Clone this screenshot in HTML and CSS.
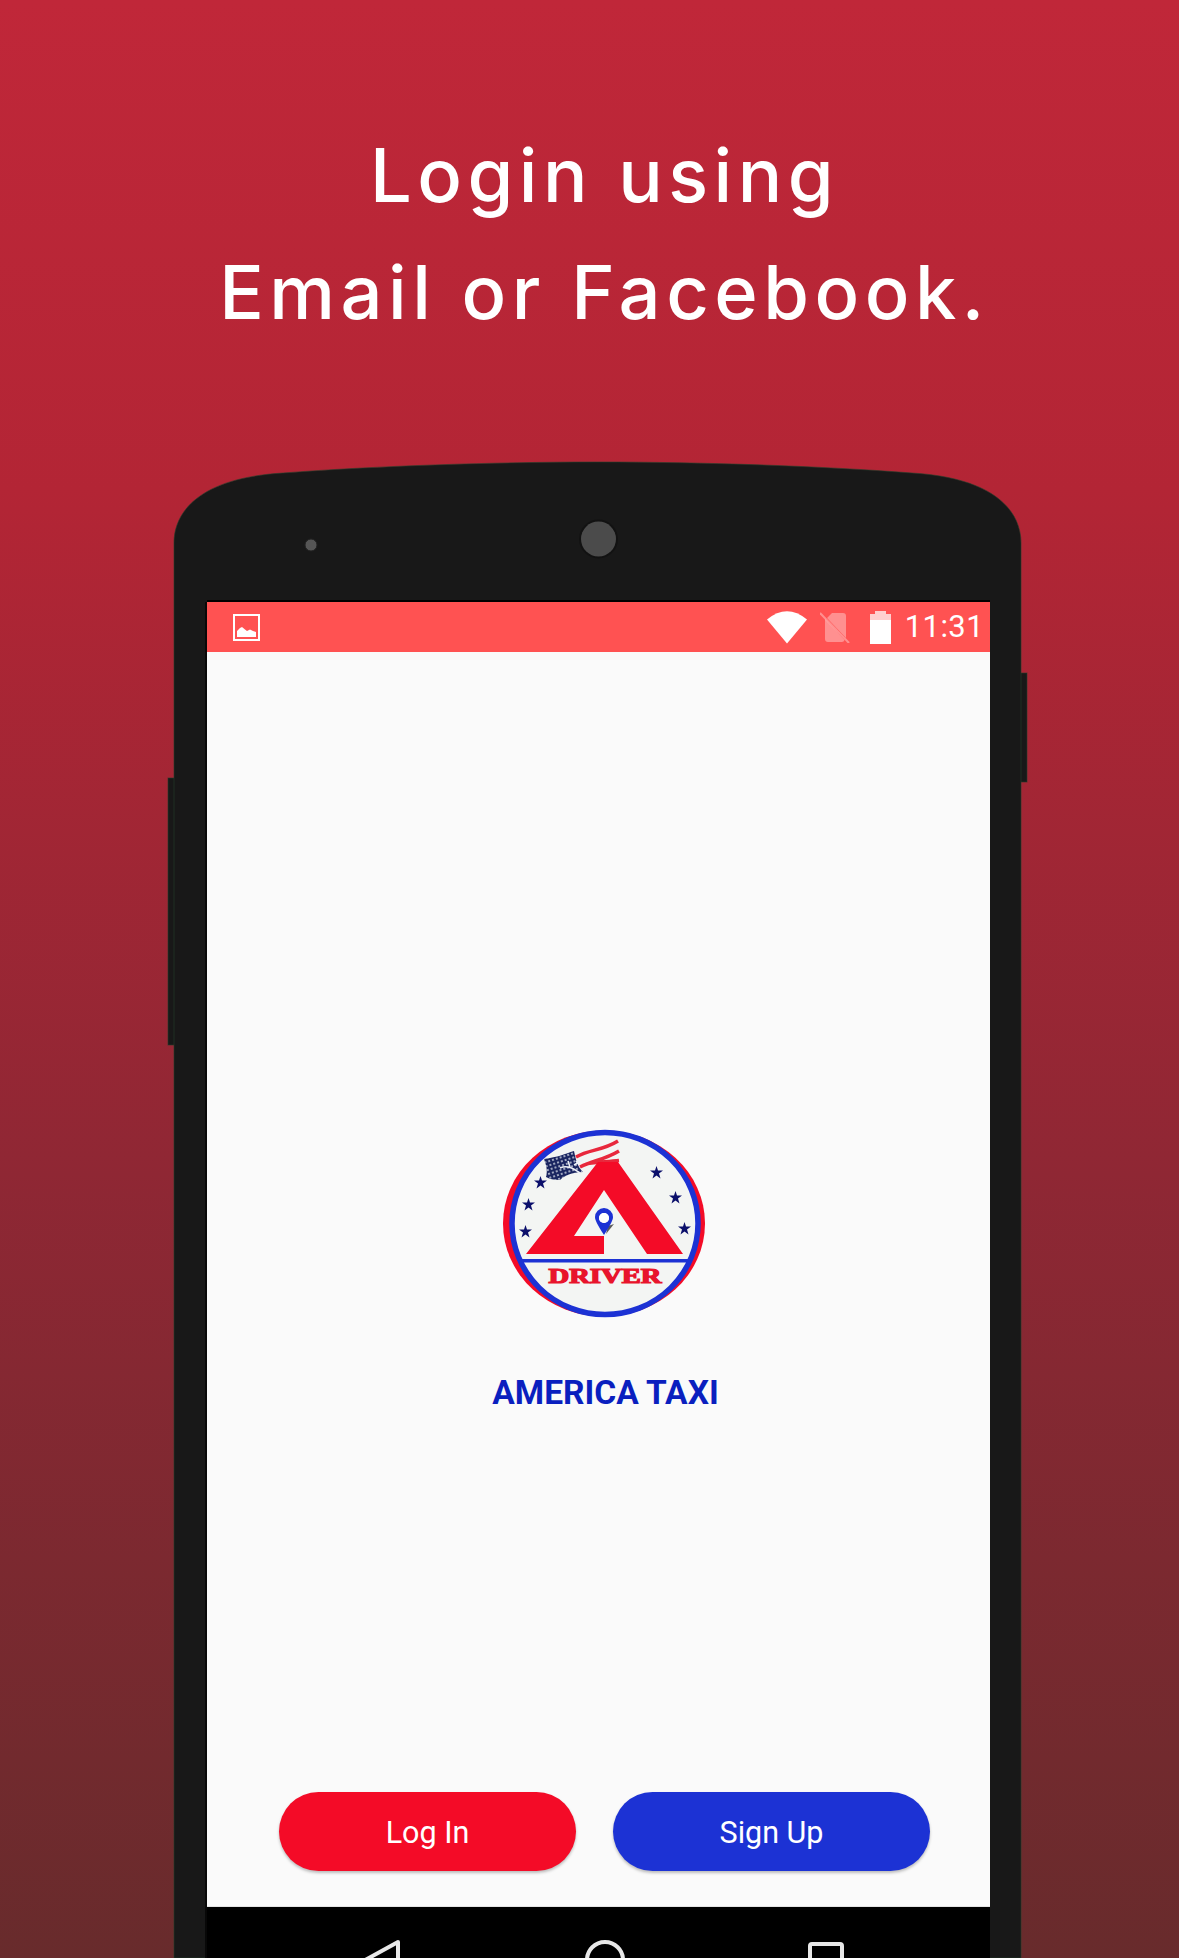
FILE: index.html
```html
<!DOCTYPE html>
<html lang="en">
<head>
<meta charset="utf-8">
<title>America Taxi Driver</title>
<link rel="stylesheet" href="styles.css">
</head>
<body>
<header class="promo">
  <h1 class="promo-title">Login using<br>Email or Facebook.</h1>
</header>
<section class="phone">
  <svg class="phone-body" viewBox="0 0 847 1496" aria-hidden="true">
    <rect class="shell" x="-6" y="316" width="20" height="267"/>
    <rect class="shell" x="834" y="211" width="19" height="109"/>
    <path class="shell" d="M0,81 C0,50 25,16 109,11 C200,4 320,0 424,0 C527,0 647,4 738,11 C822,16 847,50 847,81 V1496 H0 Z"/>
    <circle class="speaker" cx="137" cy="83" r="6"/>
    <circle class="camera-ring" cx="424.500" cy="77" r="19.500"/>
    <circle class="camera" cx="424.500" cy="77" r="17.500"/>
  </svg>
  <div class="screen">
    <div class="status-bar">
      <svg class="status-picture" width="27" height="27" viewBox="0 0 27 27" aria-hidden="true">
        <rect x="1" y="1" width="25" height="25" fill="none" stroke="#fff" stroke-width="2"/>
        <path fill="#fff" d="M4,23 V17 L7,14 L9,13 L12,15.5 L14,17 L17,15.5 L20,17 L23,18 V23 Z"/>
      </svg>
      <div class="status-right">
        <svg class="status-wifi" width="40" height="33" viewBox="0 0 40 33" aria-hidden="true">
          <path fill="#fff" d="M0,8.500 Q20,-8 40,8.500 L20,32.500 Z"/>
        </svg>
        <svg class="status-sim" width="30" height="31" viewBox="0 0 30 31" aria-hidden="true">
          <path fill="#fff" fill-opacity=".36" d="M12,1 H23 Q26,1 26,4 V26 L7,6 Z M5,7 L24.500,28 Q24,30 22,30 H8 Q5,30 5,27 Z"/>
          <path stroke="#fff" stroke-opacity=".36" stroke-width="2" d="M0,1 L29,31"/>
        </svg>
        <svg class="status-battery" width="21" height="33" viewBox="0 0 21 33" aria-hidden="true">
          <path fill="#fff" fill-opacity=".72" d="M5,0 H16 V3 H21 V10 H0 V3 H5 Z"/>
          <rect fill="#fff" y="9" width="21" height="24"/>
        </svg>
        <span class="status-time">11:31</span>
      </div>
    </div>
    <main class="app">
      <svg class="logo" width="243" height="240" viewBox="-3 0 243 240" aria-hidden="true">
        <defs>
          <pattern id="flagDots" width="4" height="4" patternUnits="userSpaceOnUse" patternTransform="rotate(-18)">
            <circle cx="2" cy="2" r=".9" fill="#dfe4ee"/>
          </pattern>
        </defs>
        <ellipse cx="124" cy="113.500" rx="101" ry="93" fill="#f40b27"/>
        <ellipse cx="125" cy="113.500" rx="93" ry="91" fill="#f3f5f3" stroke="#1c32d4" stroke-width="5.500"/>
        <path fill="none" stroke="#e8283c" stroke-width="3.500" d="M96,47 C110,39 122,41 138,31 M100,57 C114,50 124,50 139,41 M106,54 C116,52 126,52 139,50.500"/>
        <path fill="#1a2560" d="M64,49 C78,47 85,44 94,41 C96,50 97,56 103,62 C92,62 84,66 80,70 C74,70 69,69 66,67 C68,60 66,55 64,49 Z"/>
        <path fill="url(#flagDots)" d="M64,49 C78,47 85,44 94,41 C96,50 97,56 103,62 C92,62 84,66 80,70 C74,70 69,69 66,67 C68,60 66,55 64,49 Z"/>
        <path fill="none" stroke="#eef1f6" stroke-width="1.600" d="M80,58 C87,55 93,58 100,63 M88,51 L90,57 M96,52 L100,50 M94,55 L103,50"/>
        <path fill="#f40b27" fill-rule="evenodd" d="M46,144 L118,52 L138,52 L203,144 L167,144 L124,80 L94,126 L124,126 L124,144 Z"/>
        <path fill="#5b5b5b" d="M126,124 L134,114 L128,116 Z"/>
        <path fill="#1c32d4" fill-rule="evenodd" d="M124,125 C117,114 115,110 115,107 A9,9 0 0 1 133,107 C133,110 131,114 124,125 Z M124,103 A4.800,4.800 0 1 0 124,113 A4.800,4.800 0 1 0 124,103 Z"/>
        <path fill="#fff" d="M124,103 A4.800,4.800 0 1 0 124,113 A4.800,4.800 0 1 0 124,103 Z"/>
        <rect x="41" y="149" width="168" height="3.500" fill="#1c32d4"/>
        <text class="logo-word" x="125" y="172.500" text-anchor="middle" textLength="113" lengthAdjust="spacingAndGlyphs">DRIVER</text>
        <g fill="#0b0f6b">
          <path d="M176.500,56 L178,60.500 L183,60.500 L179,63.500 L180.500,68.500 L176.500,65.500 L172.500,68.500 L174,63.500 L170,60.500 L175,60.500 Z"/>
          <path d="M195.500,81 L197,85.500 L202,85.500 L198,88.500 L199.500,93.500 L195.500,90.500 L191.500,93.500 L193,88.500 L189,85.500 L194,85.500 Z"/>
          <path d="M204.500,112 L206,116.500 L211,116.500 L207,119.500 L208.500,124.500 L204.500,121.500 L200.500,124.500 L202,119.500 L198,116.500 L203,116.500 Z"/>
          <path d="M60.500,66 L62,70.500 L67,70.500 L63,73.500 L64.500,78.500 L60.500,75.500 L56.500,78.500 L58,73.500 L54,70.500 L59,70.500 Z"/>
          <path d="M48.500,88 L50,92.500 L55,92.500 L51,95.500 L52.500,100.500 L48.500,97.500 L44.500,100.500 L46,95.500 L42,92.500 L47,92.500 Z"/>
          <path d="M45.500,115 L47,119.500 L52,119.500 L48,122.500 L49.500,127.500 L45.500,124.500 L41.500,127.500 L43,122.500 L39,119.500 L44,119.500 Z"/>
        </g>
      </svg>
      <h2 class="brand">AMERICA TAXI</h2>
      <div class="actions">
        <button class="btn btn-login" type="button">Log In</button>
        <button class="btn btn-signup" type="button">Sign Up</button>
      </div>
    </main>
    <nav class="nav-bar">
      <svg width="783" height="52" viewBox="0 0 783 52" aria-hidden="true">
        <g fill="none" stroke="#e8e8e8" stroke-width="4" stroke-linejoin="round">
          <path d="M191,36 L151,58 L191,80 Z"/>
          <circle cx="398" cy="54" r="18"/>
          <rect x="603" y="38" width="32" height="32" rx="2"/>
        </g>
      </svg>
    </nav>
  </div>
</section>
</body>
</html>
```
FILE: styles.css
```css
* { box-sizing: border-box; }

html, body { margin: 0; padding: 0; }

body {
  width: 1179px;
  height: 1958px;
  overflow: hidden;
  display: flex;
  flex-direction: column;
  background: linear-gradient(180deg, #c02739 0%, #b32535 25%, #8f2734 60%, #682b2c 100%);
}

.promo {
  height: 462px;
  padding: 117px 0 0 30px;
}

.promo-title {
  margin: 0;
  text-align: center;
  font-family: "Inter", "Liberation Sans", sans-serif;
  font-weight: 500;
  font-size: 74px;
  line-height: 117px;
  letter-spacing: 5.5px;
  color: #fff;
}

.phone {
  position: relative;
  width: 847px;
  height: 1496px;
  margin-left: 174px;
  padding: 140px 0 0 33px;
}

.phone-body {
  position: absolute;
  left: 0;
  top: 0;
  width: 847px;
  height: 1496px;
  overflow: visible;
}

.shell { fill: #181818; stroke: #25402c; stroke-width: 1; stroke-opacity: .6; }
.speaker { fill: #565656; stroke: #222; stroke-width: 1; }
.camera-ring { fill: #121212; }
.camera { fill: #4b4b4b; }

.screen {
  position: relative;
  width: 783px;
  height: 1356px;
  display: flex;
  flex-direction: column;
  box-shadow: 0 -2px 0 #000, -2px 0 0 #080808;
}

.status-bar {
  flex: none;
  height: 50px;
  padding: 0 6px 0 26px;
  display: flex;
  align-items: center;
  justify-content: space-between;
  background: #ff5252;
}

.status-picture { display: block; }

.status-right {
  display: flex;
  align-items: center;
}

.status-right svg { display: block; }
.status-sim { margin-left: 13px; }
.status-battery { margin-left: 20px; }

.status-time {
  margin-left: 14px;
  font-family: "Roboto", "Liberation Sans", sans-serif;
  font-size: 31px;
  line-height: 50px;
  letter-spacing: .4px;
  color: #fff;
}

.app {
  flex: 1;
  display: flex;
  flex-direction: column;
  align-items: center;
  padding-top: 458px;
  background: #fafafa;
  border-bottom: 1px solid #e4e4e4;
}

.logo { display: block; }

.logo-word {
  font-family: "Liberation Serif", serif;
  font-weight: 700;
  font-size: 20px;
  fill: #e8142c;
  stroke: #e8142c;
  stroke-width: 1.2;
}

.brand {
  margin: 19px 0 0;
  padding-left: 14px;
  font-family: "Roboto", "Liberation Sans", sans-serif;
  font-weight: 700;
  font-size: 33.5px;
  line-height: 48px;
  color: #0a1fbf;
}

.actions {
  margin-top: auto;
  margin-bottom: 35px;
  align-self: stretch;
  display: flex;
  gap: 37px;
  padding-left: 72px;
}

.btn {
  height: 79px;
  border: 0;
  padding: 2px 0 0;
  border-radius: 40px;
  box-shadow: 0 2px 3px rgba(0, 0, 0, .25);
  font-family: "Roboto", "Liberation Sans", sans-serif;
  font-size: 30.5px;
  color: #fff;
}

.btn-login { width: 297px; background: #f40b27; }
.btn-signup { width: 317px; background: #1c32d4; }

.nav-bar {
  flex: none;
  height: 51px;
  overflow: hidden;
  background: #000;
}

.nav-bar svg { display: block; margin-top: -1px; }
```
